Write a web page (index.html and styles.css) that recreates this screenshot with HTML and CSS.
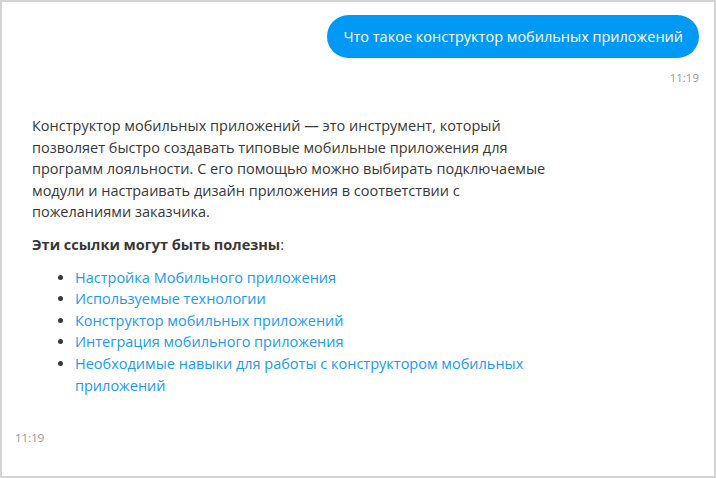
FILE: index.html
```html
<!DOCTYPE html>
<html lang="ru">
<head>
  <meta charset="UTF-8" />
  <title>Чат</title>
  <link rel="stylesheet" href="styles.css">
</head>
<body>
  <div class="chat">
    <div class="msg msg-out">
      <div class="bubble">Что такое конструктор мобильных приложений</div>
      <div class="time">11:19</div>
    </div>

    <div class="msg msg-in">
      <div class="answer">
        <p>Конструктор мобильных приложений — это инструмент, который позволяет быстро создавать типовые мобильные приложения для программ лояльности. С его помощью можно выбирать подключаемые модули и настраивать дизайн приложения в соответствии с пожеланиями заказчика.</p>
        <p><b>Эти ссылки могут быть полезны</b>:</p>
        <ul class="links">
          <li><a href="#">Настройка Мобильного приложения</a></li>
          <li><a href="#">Используемые технологии</a></li>
          <li><a href="#">Конструктор мобильных приложений</a></li>
          <li><a href="#">Интеграция мобильного приложения</a></li>
          <li><a href="#">Необходимые навыки для работы с конструктором мобильных приложений</a></li>
        </ul>
      </div>
      <div class="time">11:19</div>
    </div>
  </div>
</body>
</html>
```

FILE: styles.css
```css
html, body {
  margin: 0;
  height: 100%;
}

body {
  font-family: 'Open Sans', sans-serif;
  font-size: 14.5px;
  color: #383838;
  background: #fff;
  box-sizing: border-box;
  border: 2px solid #d4d4d4;
}

.chat {
  padding: 13px 15px 0 13px;
}

.msg-out {
  display: flex;
  flex-direction: column;
  align-items: flex-end;
}

.bubble {
  background: #0099f6;
  color: #fff;
  padding: 11px 16px;
  border-radius: 22px;
  line-height: 21px;
}

.time {
  font-size: 11.5px;
  color: #999;
  margin-top: 12px;
}

.msg-in {
  margin-top: 30px;
}

.answer {
  padding: 0 0 0 17px;
  max-width: 525px;
  line-height: 21.6px;
}

.answer p {
  margin: 0 0 11px;
}

.answer b {
  font-weight: 700;
}

.links {
  margin: 0 0 34px;
  padding-left: 43px;
}

.links a {
  color: #1a9af0;
  text-decoration: none;
}
```
